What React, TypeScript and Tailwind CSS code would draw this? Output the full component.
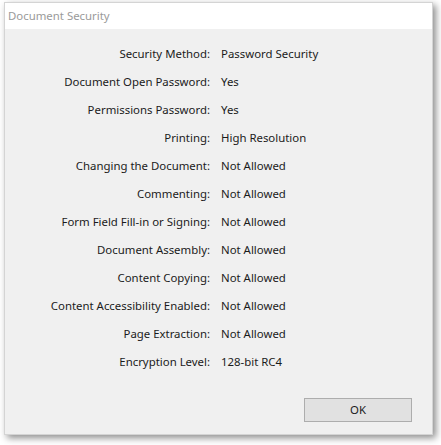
const rows: [string, string][] = [
  ["Security Method:", "Password Security"],
  ["Document Open Password:", "Yes"],
  ["Permissions Password:", "Yes"],
  ["Printing:", "High Resolution"],
  ["Changing the Document:", "Not Allowed"],
  ["Commenting:", "Not Allowed"],
  ["Form Field Fill-in or Signing:", "Not Allowed"],
  ["Document Assembly:", "Not Allowed"],
  ["Content Copying:", "Not Allowed"],
  ["Content Accessibility Enabled:", "Not Allowed"],
  ["Page Extraction:", "Not Allowed"],
  ["Encryption Level:", "128-bit RC4"],
];

export default function App() {
  return (
    <div
      className="w-[441px] h-[445px] bg-white overflow-hidden pt-[2px] pl-[4px]"
      style={{ fontFamily: '"Noto Sans", "Open Sans", sans-serif' }}
    >
      <div className="w-[429px] h-[433px] flex flex-col border border-[#d4d4d4] bg-[#f0f0f0] shadow-[3px_3px_7px_rgba(0,0,0,0.45)]">
        <div className="h-[26px] bg-white flex items-center pl-[3px] text-[11.4px] text-[#9a9a9a]">
          Document Security
        </div>
        <div className="flex-1 flex flex-col pt-[11px]">
          {rows.map(([label, value]) => (
            <div key={label} className="h-[28px] flex items-center text-[11.4px] text-[#1b1b1b]">
              <div className="w-[205px] text-right">{label}</div>
              <div className="pl-[11px]">{value}</div>
            </div>
          ))}
          <div className="flex justify-end pr-[20px] mt-[22px]">
            <button className="w-[108px] h-[24px] bg-[#e1e1e1] border border-[#adadad] text-[11.4px] text-[#1b1b1b]">
              OK
            </button>
          </div>
        </div>
      </div>
    </div>
  );
}
